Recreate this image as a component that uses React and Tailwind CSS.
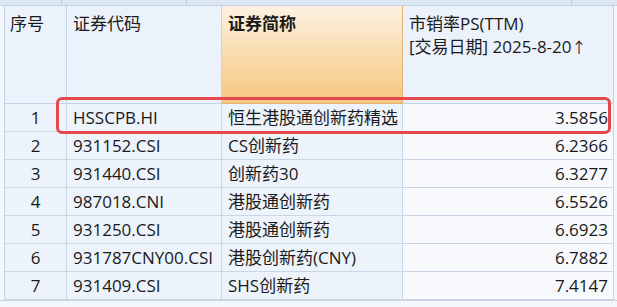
import React from "react";

const rows = [
  ["1", "HSSCPB.HI", "恒生港股通创新药精选", "3.5856"],
  ["2", "931152.CSI", "CS创新药", "6.2366"],
  ["3", "931440.CSI", "创新药30", "6.3277"],
  ["4", "987018.CNI", "港股通创新药", "6.5526"],
  ["5", "931250.CSI", "港股通创新药", "6.6923"],
  ["6", "931787CNY00.CSI", "港股创新药(CNY)", "6.7882"],
  ["7", "931409.CSI", "SHS创新药", "7.4147"],
];

const font = { fontFamily: '"Open Sans", "Noto Sans CJK SC", sans-serif' };

export default function App() {
  return (
    <div className="w-[617px] h-[307px] bg-[#f3f6fa] overflow-hidden relative text-[#1a1a1a]" style={font}>
      {/* top strip */}
      <div className="h-[6px] bg-[#dce7f4] border-b border-[#c3d2e4] flex">
        <div className="w-[62px] border-r border-[#b9cbe0]" />
        <div className="w-[125px] border-r border-[#b9cbe0]" />
        <div className="w-[385px] border-r border-[#b9cbe0]" />
      </div>
      <div className="pl-[4px] relative">
        <div className="grid grid-cols-[62px_155px_181px_211px] border-l border-[#c3d2e4]">
          {/* header */}
          <div className="h-[98px] bg-[#ebf2fb] border-r border-b border-[#c3d2e4] pl-[5px] pt-[6px] text-[17px] leading-[23px]">序号</div>
          <div className="h-[98px] bg-[#ebf2fb] border-r border-b border-[#c3d2e4] pl-[6px] pt-[6px] text-[17px] leading-[23px]">证券代码</div>
          <div className="h-[98px] bg-gradient-to-b from-[#fdf1e0] via-[#f9dcae] to-[#f5c680] border-r border-b border-[#e3b574] pl-[6px] pt-[6px] text-[17px] leading-[23px] font-bold">证券简称</div>
          <div className="h-[98px] bg-[#ebf2fb] border-r border-b border-[#c3d2e4] pl-[6px] pt-[6px] text-[17px] leading-[23px]">
            <div>市销率PS(TTM)</div>
            <div>[交易日期] 2025-8-20<span className="text-[15px]">↑</span></div>
          </div>
          {rows.map((r) => (
            <React.Fragment key={r[0]}>
              <div className="h-[28px] bg-[#edf3fa] border-r border-b border-[#c9d6e5] text-center text-[17px] leading-[28px]">{r[0]}</div>
              <div className="h-[28px] bg-[#edf3fa] border-r border-b border-[#c9d6e5] pl-[6px] text-[17px] leading-[28px] whitespace-nowrap overflow-hidden">{r[1]}</div>
              <div className="h-[28px] bg-[#edf3fa] border-r border-b border-[#c9d6e5] pl-[6px] text-[17px] leading-[28px] whitespace-nowrap overflow-hidden">{r[2]}</div>
              <div className="h-[28px] bg-[#f7f9fc] border-r border-b border-[#c9d6e5] pr-[5px] text-right text-[17px] leading-[28px]">{r[3]}</div>
            </React.Fragment>
          ))}
        </div>
        {/* red highlight */}
        <div className="absolute left-[56px] top-[91px] w-[555px] h-[37px] border-[3px] border-[#e5484a] rounded-[6px] pointer-events-none" />
      </div>
      <div className="h-[1px] bg-[#c9d3de]" />
    </div>
  );
}
